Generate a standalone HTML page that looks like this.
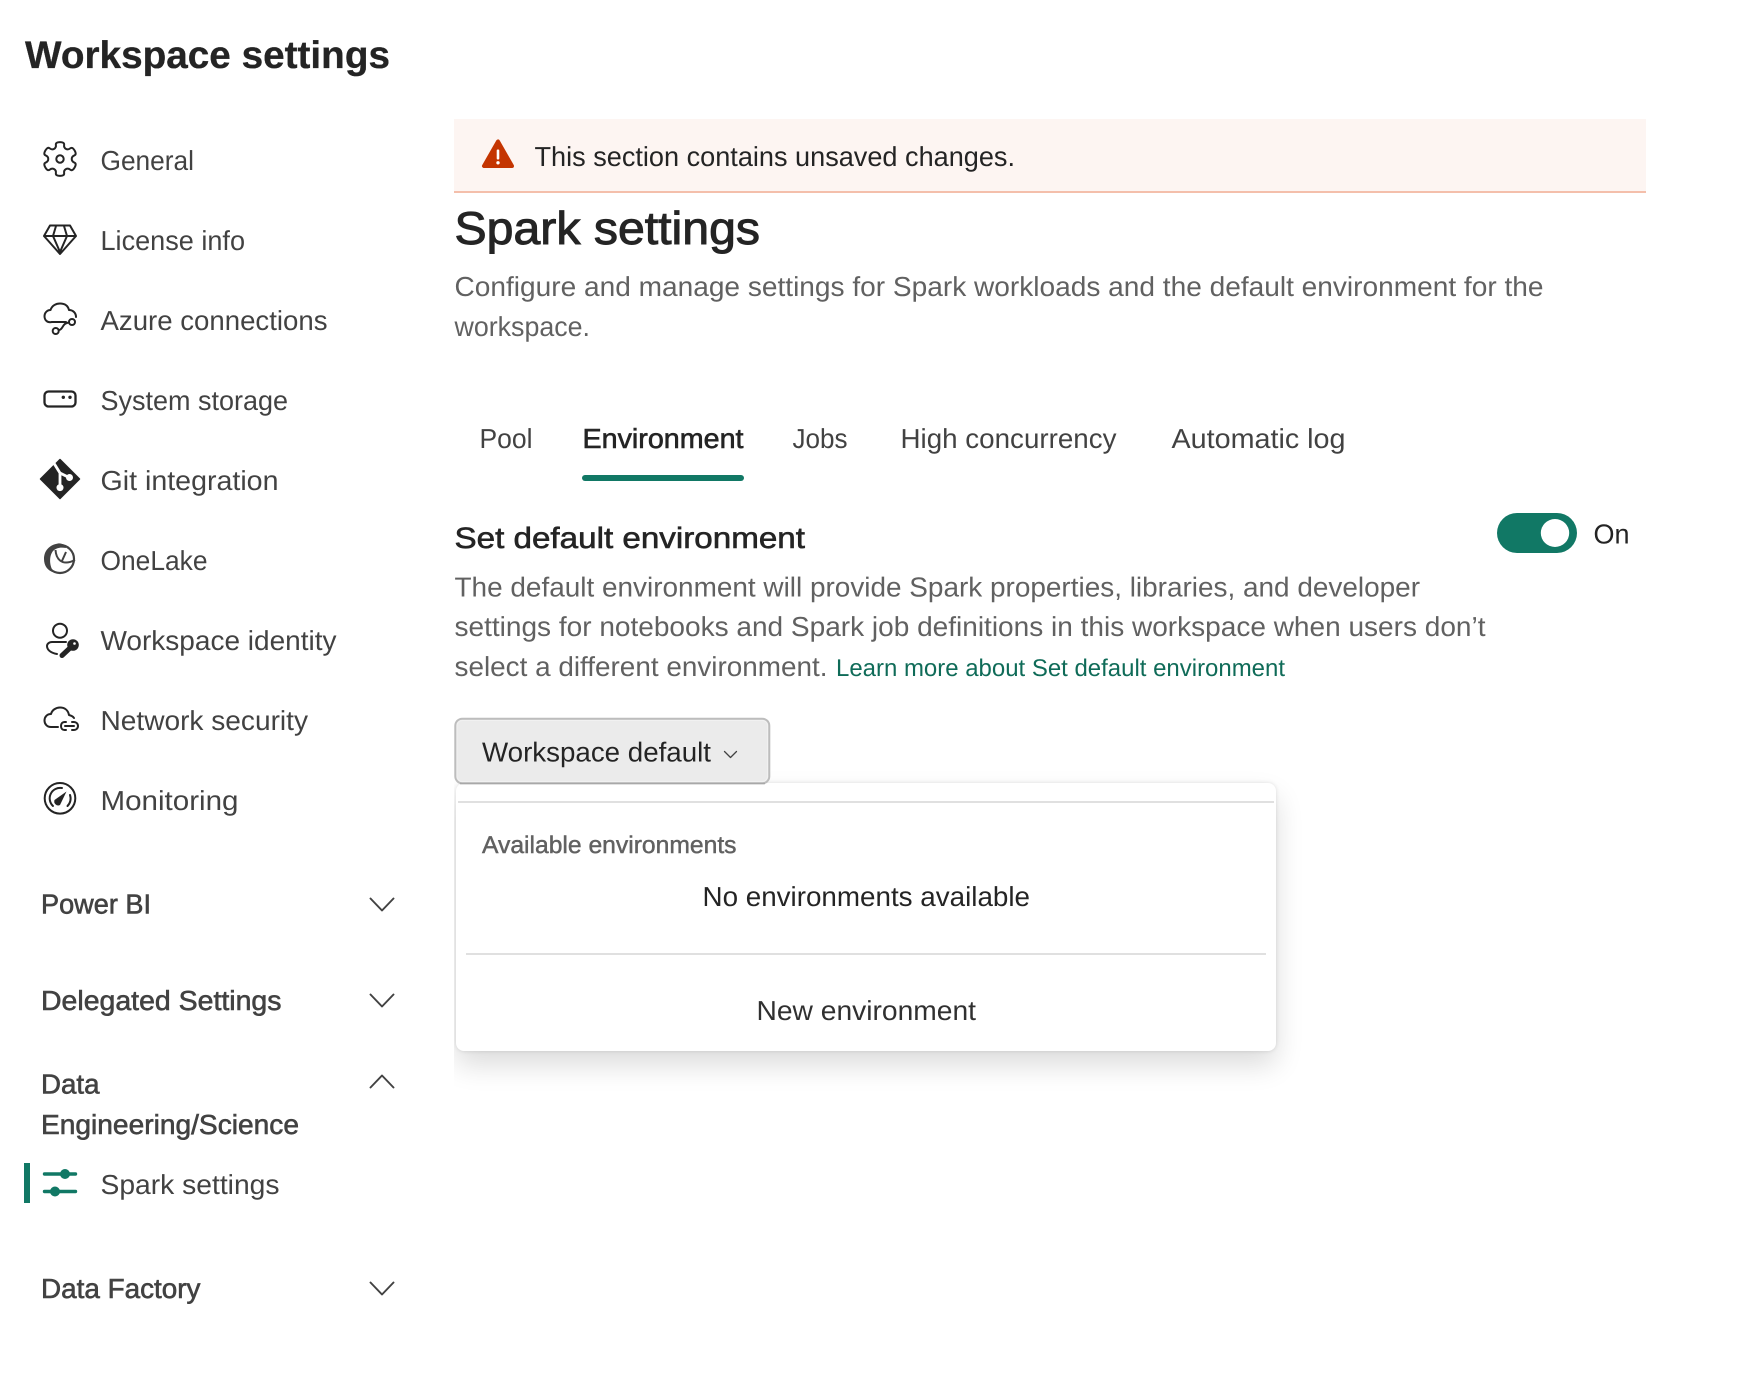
<!DOCTYPE html>
<html lang="en">
<head>
<meta charset="utf-8">
<title>Workspace settings</title>
<style>
html,body{margin:0;padding:0;background:#fff;width:1760px;height:1382px;overflow:hidden}
#clip{position:absolute;left:454px;top:700px;width:1306px;height:682px;overflow:hidden}
#panel{position:absolute;left:2px;top:83px;width:820px;height:268px;background:#fff;border-radius:8px;box-shadow:0 0 4px rgba(0,0,0,.12),0 14px 28px rgba(0,0,0,.14)}
svg{position:absolute;left:0;top:0;display:block}
text{font-family:"Liberation Sans",Arial,sans-serif;text-rendering:geometricPrecision}
.n{font-size:27.5px;fill:#424242}
.s{font-size:27.5px;fill:#424242;stroke:#424242;stroke-width:.6px}
.p{font-size:27.5px;fill:#616161}
.d{font-size:27.5px;fill:#242424}
.ic{fill:none;stroke:#242424;stroke-width:2;stroke-linejoin:round;stroke-linecap:round}
.ch{fill:none;stroke:#424242;stroke-width:1.9;stroke-linecap:round;stroke-linejoin:round}
</style>
</head>
<body>
<div id="clip"><div id="panel"></div></div>
<svg width="1760" height="1382" viewBox="0 0 1760 1382" xmlns="http://www.w3.org/2000/svg">
<text x="25" y="68" font-size="38.5" font-weight="700" fill="#242424" stroke="#242424" stroke-width=".3" textLength="365" lengthAdjust="spacingAndGlyphs">Workspace settings</text>

<g transform="translate(60,159)"><path class="ic" d="M0 -16.9Q4.53 -16.9 4.12 -14.16 3.71 -11.41 5.87 -10.17 8.03 -8.92 10.2 -10.65 12.37 -12.37 14.64 -8.45 16.9 -4.53 14.32 -3.52 11.74 -2.5 11.74 0 11.74 2.5 14.32 3.52 16.9 4.53 14.64 8.45 12.37 12.37 10.2 10.65 8.03 8.92 5.87 10.17 3.71 11.41 4.12 14.16 4.53 16.9 0 16.9-4.53 16.9-4.12 14.16-3.71 11.41-5.87 10.17-8.03 8.92-10.2 10.65-12.37 12.37-14.64 8.45-16.9 4.53-14.32 3.52-11.74 2.5-11.74 0-11.74-2.5-14.32-3.52-16.9-4.53-14.64-8.45-12.37-12.37-10.2-10.65-8.03-8.92-5.87-10.17-3.71-11.41-4.12-14.16-4.53-16.9 0-16.9Z"/><circle class="ic" r="3.7"/></g>
<path class="ic" d="M50 225.5H70L76 236 60 254 44 236ZM44 236H76M56 226 53 236 60 252 67 236 64 226"/>
<path class="ic" d="M66 322H52C47 323 44.5 320 44.5 316 44.5 313 47 310 50.5 310 52 305.5 56 303.5 60 303.5 65 303.5 68 306 69 310 73 310 76 313 76 317M59 330C63 330 62 323 69 322.5"/>
<circle class="ic" cx="72" cy="322" r="3"/><circle class="ic" cx="55.7" cy="331" r="3"/>
<rect class="ic" x="44.5" y="391.5" width="31" height="15" rx="4" style="stroke-width:2.3"/>
<circle cx="63.3" cy="397.3" r="1.7" fill="#242424"/><circle cx="70" cy="397.3" r="1.7" fill="#242424"/>
<path d="M60 459.5 79.5 479 60 498.5 40.5 479Z" fill="#242424" stroke="#242424" stroke-width="1.5" stroke-linejoin="round"/>
<path d="M53.500 462.500 60 473V487M60 473 69 477.500" fill="none" stroke="#fff" stroke-width="2.800"/>
<circle cx="60" cy="487.600" r="3.500" fill="#fff"/><circle cx="69.500" cy="477.500" r="3.500" fill="#fff"/>
<circle cx="60" cy="559" r="14" fill="none" stroke="#424242" stroke-width="2.200"/>
<path d="M58 543.500C49 545 44 551 44 559 44 566 48 571 54 572.500 49 566 49 556 53 551 56 548 60 547 66 548 65 545 62 543 58 543.500Z" fill="#424242"/>
<path d="M55.500 550C56 558 61 567 75 560M61.500 562 66 552" fill="none" stroke="#424242" stroke-width="2"/>
<circle class="ic" cx="60" cy="630.700" r="7"/>
<path class="ic" d="M66 642H52C49 642 47 644 47 646 47 650 51 653 57 654"/>
<circle cx="73" cy="645" r="5.800" fill="#242424"/><path d="M70 648 62 655.500" stroke="#242424" stroke-width="5" stroke-linecap="round"/><circle cx="74.500" cy="643.500" r="1.300" fill="#fff"/>
<path class="ic" d="M58 727H51C47 727 44.500 724 44.500 720.500 44.500 717 47 714 51 714 52 710 56 707.500 60 707.500 64.500 707.500 68 710 69 715 71 715.500 73 716.500 74 718M66 722H64.500C62.500 722 61 723.500 61 726 61 728.500 62.500 730 64.500 730H66M72 722H74C76 722 78 723.500 78 726 78 728.500 76 730 74 730H72M65 726H74"/>
<circle class="ic" cx="60" cy="798.300" r="15.300"/>
<path class="ic" d="M53 806A10.500 10.500 0 0 1 62 788M70 795A10.500 10.500 0 0 1 67.500 806"/>
<path d="M66.500 791.500 54.500 800A4 4 0 0 0 60 805Z" fill="#242424"/>

<text class="n" x="100.500" y="170" textLength="93.500" lengthAdjust="spacingAndGlyphs">General</text>
<text class="n" x="100.500" y="250" textLength="144.500" lengthAdjust="spacingAndGlyphs">License info</text>
<text class="n" x="100.500" y="330" textLength="227" lengthAdjust="spacingAndGlyphs">Azure connections</text>
<text class="n" x="100.500" y="410" textLength="187.500" lengthAdjust="spacingAndGlyphs">System storage</text>
<text class="n" x="100.500" y="490" textLength="178" lengthAdjust="spacingAndGlyphs">Git integration</text>
<text class="n" x="100.500" y="570" textLength="107" lengthAdjust="spacingAndGlyphs">OneLake</text>
<text class="n" x="100.500" y="650" textLength="236" lengthAdjust="spacingAndGlyphs">Workspace identity</text>
<text class="n" x="100.500" y="730" textLength="207.500" lengthAdjust="spacingAndGlyphs">Network security</text>
<text class="n" x="100.500" y="810" textLength="138" lengthAdjust="spacingAndGlyphs">Monitoring</text>

<text class="s" x="41" y="913.500" textLength="110" lengthAdjust="spacingAndGlyphs">Power BI</text>
<path class="ch" d="M370.500 898.500 382 910.500 393.500 898.500"/>
<text class="s" x="41" y="1010" textLength="240.500" lengthAdjust="spacingAndGlyphs">Delegated Settings</text>
<path class="ch" d="M370.500 994.500 382 1006.500 393.500 994.500"/>
<text class="s" x="41" y="1093.500" textLength="58.500" lengthAdjust="spacingAndGlyphs">Data</text>
<text class="s" x="41" y="1134" textLength="258" lengthAdjust="spacingAndGlyphs">Engineering/Science</text>
<path class="ch" d="M370.500 1087.500 382 1075.500 393.500 1087.500"/>
<rect x="24" y="1163" width="6" height="40" fill="#117865"/>
<path d="M44.500 1174H75.500M44.500 1191.500H75.500" stroke="#117865" stroke-width="3.400" stroke-linecap="round"/>
<circle cx="65" cy="1174" r="5" fill="#117865"/><circle cx="55" cy="1191.500" r="5" fill="#117865"/>
<text class="n" x="100.500" y="1194" textLength="179" lengthAdjust="spacingAndGlyphs">Spark settings</text>
<text class="s" x="41" y="1298" textLength="159.500" lengthAdjust="spacingAndGlyphs">Data Factory</text>
<path class="ch" d="M370.500 1282.500 382 1294.500 393.500 1282.500"/>

<rect x="454" y="119" width="1192" height="72" fill="#fdf5f2"/>
<rect x="454" y="191" width="1192" height="2" fill="#f4bfab"/>
<path d="M498 141.500 484 166H512Z" fill="#c43501" stroke="#c43501" stroke-width="4" stroke-linejoin="round"/>
<rect x="496.700" y="149.500" width="2.600" height="10" fill="#fff" rx="1"/><circle cx="498" cy="162.800" r="1.700" fill="#fff"/>
<text class="d" x="534.500" y="166" textLength="480.500" lengthAdjust="spacingAndGlyphs">This section contains unsaved changes.</text>

<text x="454.500" y="244" font-size="46" fill="#242424" stroke="#242424" stroke-width="1" textLength="305.500" lengthAdjust="spacingAndGlyphs">Spark settings</text>
<text class="p" x="454.500" y="296" textLength="1089" lengthAdjust="spacingAndGlyphs">Configure and manage settings for Spark workloads and the default environment for the</text>
<text class="p" x="454.500" y="336" textLength="135.500" lengthAdjust="spacingAndGlyphs">workspace.</text>

<text class="n" x="479.500" y="448" textLength="53" lengthAdjust="spacingAndGlyphs">Pool</text>
<text class="d" x="582.500" y="448" stroke="#242424" stroke-width=".6" textLength="161" lengthAdjust="spacingAndGlyphs">Environment</text>
<text class="n" x="792.500" y="448" textLength="55" lengthAdjust="spacingAndGlyphs">Jobs</text>
<text class="n" x="900.500" y="448" textLength="216" lengthAdjust="spacingAndGlyphs">High concurrency</text>
<text class="n" x="1171.500" y="448" textLength="174" lengthAdjust="spacingAndGlyphs">Automatic log</text>
<rect x="582" y="475" width="162" height="6" rx="3" fill="#117865"/>

<text class="d" x="454.500" y="548" stroke="#242424" stroke-width=".6" textLength="350.500" lengthAdjust="spacingAndGlyphs" style="font-size:29.500px">Set default environment</text>
<rect x="1497" y="513" width="80" height="40" rx="20" fill="#117865"/>
<ellipse cx="1555" cy="533" rx="14.200" ry="14" fill="#fff"/>
<text class="d" x="1593.500" y="543.500" textLength="36" lengthAdjust="spacingAndGlyphs">On</text>

<text class="p" x="454.500" y="596.400" textLength="965.500" lengthAdjust="spacingAndGlyphs">The default environment will provide Spark properties, libraries, and developer</text>
<text class="p" x="454.500" y="636" textLength="1031" lengthAdjust="spacingAndGlyphs">settings for notebooks and Spark job definitions in this workspace when users don’t</text>
<text class="p" x="454.500" y="676" textLength="373" lengthAdjust="spacingAndGlyphs">select a different environment.</text>
<text x="836" y="676" font-size="24.200" fill="#0f6b58" textLength="449" lengthAdjust="spacingAndGlyphs">Learn more about Set default environment</text>

<rect x="455.300" y="718.700" width="314" height="64.600" rx="7" fill="#ebebeb" stroke="#bdbdbd" stroke-width="2"/>
<rect x="457" y="720.500" width="310.500" height="61" rx="5" fill="none" stroke="#f1f1f1" stroke-width="1"/>
<path d="M460 783.500H765" stroke="#a8a8a8" stroke-width="1.500"/>
<text class="d" x="482" y="761.500" textLength="229" lengthAdjust="spacingAndGlyphs">Workspace default</text>
<path d="M724.500 751.500 730.500 757.500 736.500 751.500" fill="none" stroke="#424242" stroke-width="1.300" stroke-linecap="round" stroke-linejoin="round"/>

<rect x="458" y="801" width="816" height="2" fill="#e0e0e0"/>
<text x="482" y="853" font-size="24.200" fill="#616161" stroke="#616161" stroke-width=".45" textLength="254.500" lengthAdjust="spacingAndGlyphs">Available environments</text>
<text class="d" x="702.500" y="906" textLength="327.500" lengthAdjust="spacingAndGlyphs">No environments available</text>
<rect x="466" y="953" width="800" height="2" fill="#e0e0e0"/>
<text class="d" x="756.500" y="1020" style="fill:#303030" textLength="219.500" lengthAdjust="spacingAndGlyphs">New environment</text>
</svg>
</body>
</html>
